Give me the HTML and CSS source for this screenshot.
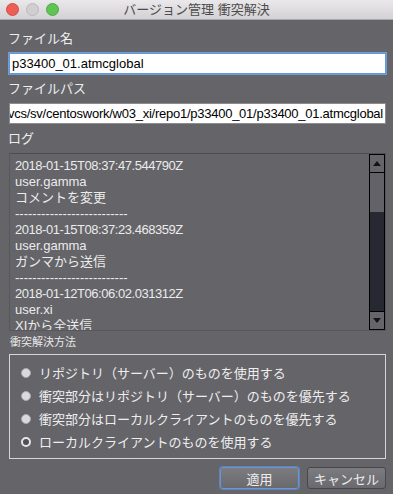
FILE: index.html
```html
<!DOCTYPE html>
<html lang="ja">
<head>
    <meta charset="UTF-8">
    <title>バージョン管理 衝突解決</title>
    <link rel="stylesheet" href="styles.css">
</head>
<body>

    <!-- WINDOW TITLE -->
    <div class="titlebar">
        <div class="lights">
            <span class="light red"></span>
            <span class="light gray"></span>
            <span class="light green"></span>
        </div>
        <span class="title">バージョン管理 衝突解決</span>
    </div>

    <div class="content">
        <p class="label">ファイル名</p>
        <div class="field focused">p33400_01.atmcglobal</div>

        <p class="label">ファイルパス</p>
        <div class="field right"><span>/home/user/vcs/sv/centoswork/w03_xi/repo1/p33400_01/p33400_01.atmcglobal</span></div>

        <p class="label">ログ</p>
        <div class="log">
            <div class="log-text">
                <div class="ts">2018-01-15T08:37:47.544790Z</div>
                <div>user.gamma</div>
                <div>コメントを変更</div>
                <div>--------------------------</div>
                <div class="ts">2018-01-15T08:37:23.468359Z</div>
                <div>user.gamma</div>
                <div>ガンマから送信</div>
                <div>--------------------------</div>
                <div class="ts">2018-01-12T06:06:02.031312Z</div>
                <div>user.xi</div>
                <div>XIから全送信</div>
            </div>
            <div class="scrollbar">
                <div class="arrow-btn"><span class="tri up"></span></div>
                <div class="track"><div class="thumb"></div></div>
                <div class="arrow-btn"><span class="tri down"></span></div>
            </div>
        </div>

        <p class="small-label">衝突解決方法</p>
        <div class="radio-box">
            <div class="radio-row"><span class="dot"></span>リポジトリ（サーバー）のものを使用する</div>
            <div class="radio-row"><span class="dot"></span>衝突部分はリポジトリ（サーバー）のものを優先する</div>
            <div class="radio-row"><span class="dot"></span>衝突部分はローカルクライアントのものを優先する</div>
            <div class="radio-row"><span class="dot checked"></span>ローカルクライアントのものを使用する</div>
        </div>

        <div class="buttons">
            <button class="btn default">適用</button>
            <button class="btn">キャンセル</button>
        </div>
    </div>

</body>
</html>
```

FILE: styles.css
```css
* {
    margin: 0;
    padding: 0;
    box-sizing: border-box;
}
body {
    width: 393px;
    height: 494px;
    overflow: hidden;
    background-color: rgb(101,100,105);
    font-family: "Liberation Sans", "Noto Sans CJK JP", sans-serif;
    font-size: 13px;
    color: rgb(232,232,232);
}

/* title bar */
.titlebar {
    height: 20px;
    background: linear-gradient(rgb(234,232,234), rgb(211,209,211));
    border-bottom: 1px solid rgb(170,168,170);
    display: flex;
    align-items: center;
    position: relative;
}
.lights {
    display: flex;
    gap: 7px;
    padding-left: 6px;
}
.light {
    width: 13px;
    height: 13px;
    border-radius: 50%;
}
.red {
    background-color: rgb(236,95,87);
    border: 1px solid rgb(214,76,69);
}
.gray {
    background-color: rgb(208,206,208);
    border: 1px solid rgb(186,184,186);
}
.green {
    background-color: rgb(96,196,84);
    border: 1px solid rgb(78,170,66);
}
.title {
    position: absolute;
    left: 0;
    right: 0;
    text-align: center;
    color: rgb(76,76,76);
    font-size: 13px;
    line-height: 19px;
}

/* main area */
.content {
    padding: 0 7px 0 9px;
}
.label {
    line-height: 16px;
    margin: 11px 0 6px -1px;
    color: rgb(238,238,238);
}
.field {
    height: 21px;
    background-color: white;
    color: black;
    border: 1px solid rgb(140,140,142);
    padding: 0 2px;
    line-height: 19px;
    white-space: nowrap;
    overflow: hidden;
}
.field.focused {
    border-color: rgb(92,152,232);
    box-shadow: 0 0 0 1px rgba(130,178,240,0.7);
}
.field.right {
    display: flex;
    justify-content: flex-end;
    letter-spacing: -0.25px;
}
.content .label:nth-of-type(2),
.content .label:nth-of-type(3) {
    margin-top: 7px;
}

/* log box */
.log {
    height: 178px;
    display: flex;
    border: 1px solid rgb(88,87,92);
    border-top-color: rgb(78,77,82);
}
.log-text {
    flex: 1;
    overflow: hidden;
    padding: 4px 5px;
    line-height: 16px;
    white-space: nowrap;
    color: rgb(235,235,235);
}
.ts {
    letter-spacing: -0.45px;
}
.scrollbar {
    width: 16px;
    display: flex;
    flex-direction: column;
    border: 1px solid black;
}
.arrow-btn {
    height: 18px;
    background-color: rgb(102,101,106);
    display: flex;
    align-items: center;
    justify-content: center;
}
.arrow-btn:first-child {
    border-bottom: 1px solid black;
}
.arrow-btn:last-child {
    border-top: 1px solid black;
}
.tri {
    width: 0;
    height: 0;
    border-left: 4px solid transparent;
    border-right: 4px solid transparent;
}
.tri.up {
    border-bottom: 5px solid rgb(20,20,24);
}
.tri.down {
    border-top: 5px solid rgb(20,20,24);
}
.track {
    flex: 1;
    background-color: rgb(40,40,50);
}
.thumb {
    height: 39px;
    background-color: rgb(99,98,104);
}

/* radio group */
.small-label {
    font-size: 11px;
    line-height: 13px;
    margin: 5px 0 5px 1px;
}
.radio-box {
    height: 105px;
    border: 1px solid rgb(214,214,216);
    padding: 6px 0 0 11px;
}
.radio-row {
    height: 23px;
    display: flex;
    align-items: center;
    gap: 8px;
    font-size: 13px;
    color: rgb(238,238,238);
}
.dot {
    width: 10px;
    height: 10px;
    border-radius: 50%;
    background-color: rgb(218,218,220);
    border: 1px solid rgb(170,170,172);
}
.dot.checked {
    background-color: rgb(80,80,84);
    border: 2px solid rgb(230,230,232);
}

/* buttons */
.buttons {
    display: flex;
    justify-content: flex-end;
    gap: 8px;
    margin-top: 8px;
}
.btn {
    width: 79px;
    height: 22px;
    font-family: "Liberation Sans", "Noto Sans CJK JP", sans-serif;
    font-size: 13px;
    color: rgb(236,236,236);
    background: linear-gradient(rgb(124,123,128), rgb(106,105,110));
    border: 1px solid rgb(72,71,76);
    border-radius: 3px;
}
.btn.default {
    border-color: rgb(98,150,222);
    box-shadow: 0 0 0 1px rgba(110,160,230,0.5);
}
```
